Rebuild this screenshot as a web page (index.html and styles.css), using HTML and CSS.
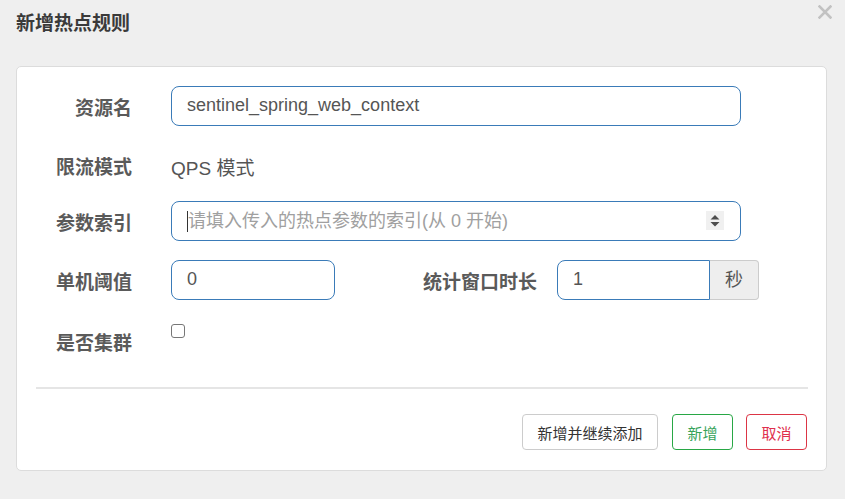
FILE: index.html
```html
<!DOCTYPE html>
<html lang="zh">
<head>
<meta charset="utf-8">
<title>新增热点规则</title>
<link rel="stylesheet" href="styles.css">
</head>
<body>
<div class="dialog">
  <div class="dialog-head">
    <h3 class="dialog-title">新增热点规则</h3>
    <svg class="close" width="14" height="14" viewBox="0 0 14 14"><path d="M1.5 1.5 L12.5 12.5 M12.5 1.5 L1.5 12.5" stroke="#c2c2c2" stroke-width="2.6" stroke-linecap="square"/></svg>
  </div>
  <div class="card">
    <div class="row row-1">
      <label class="label">资源名</label>
      <div class="control wide">sentinel_spring_web_context</div>
    </div>
    <div class="row row-2">
      <label class="label">限流模式</label>
      <div class="static">QPS 模式</div>
    </div>
    <div class="row row-3">
      <label class="label">参数索引</label>
      <div class="control wide number">
        <span class="caret"></span><span class="placeholder">请填入传入的热点参数的索引(从 0 开始)</span>
        <span class="spinner">
          <svg width="18" height="19" viewBox="0 0 18 19"><path d="M9 4 L13.5 8.5 L4.5 8.5 Z M4.5 11 L13.5 11 L9 15.5 Z" fill="#4d4d4d"/></svg>
        </span>
      </div>
    </div>
    <div class="row row-4">
      <label class="label">单机阈值</label>
      <div class="control small">0</div>
      <label class="label label-2">统计窗口时长</label>
      <div class="group">
        <div class="control group-input">1</div>
        <div class="addon">秒</div>
      </div>
    </div>
    <div class="row row-5">
      <label class="label">是否集群</label>
      <span class="checkbox"></span>
    </div>
    <div class="divider"></div>
    <div class="actions">
      <button class="btn btn-default">新增并继续添加</button>
      <button class="btn btn-success">新增</button>
      <button class="btn btn-danger">取消</button>
    </div>
  </div>
</div>
</body>
</html>
```

FILE: styles.css
```css
* { box-sizing: border-box; }
html, body { margin: 0; padding: 0; }
body {
  background: #efefef;
  font-family: "Liberation Sans", "Noto Sans CJK SC", sans-serif;
  color: #555;
  width: 845px;
  height: 499px;
  overflow: hidden;
}
.dialog { padding: 0 0 0 16px; }
.dialog-head {
  position: relative;
  height: 66px;
  padding-top: 14px;
}
.dialog-title {
  margin: 0;
  font-size: 19px;
  line-height: 20px;
  font-weight: bold;
  color: #3a3a3a;
}
.close {
  position: absolute;
  left: 802px;
  top: 5px;
}
.card {
  width: 811px;
  height: 405px;
  background: #fff;
  border: 1px solid #dcdcdc;
  border-radius: 5px;
  padding: 19px 0 0 0;
}
.row {
  display: flex;
  align-items: center;
  height: 40px;
}
.row-1 { margin-bottom: 19px; }
.row-2 { margin-bottom: 16px; }
.row-3 { margin-bottom: 19px; }
.row-4 { margin-bottom: 21px; }
.label {
  width: 115px;
  height: 40px;
  margin-right: 39px;
  padding-top: 6px;
  text-align: right;
  font-size: 19px;
  font-weight: bold;
  color: #5a5a5a;
  line-height: 34px;
  flex: none;
}
.static {
  font-size: 19px;
  color: #555;
  padding-top: 2px;
}
.control {
  height: 40px;
  border: 1px solid #3a7bb8;
  border-radius: 8px;
  padding: 0 15px;
  font-size: 18px;
  line-height: 36px;
  color: #555;
  position: relative;
  flex: none;
}
.wide { width: 570px; }
.small { width: 164px; }
.number { display: flex; align-items: center; }
.caret {
  display: inline-block;
  width: 1px;
  height: 21px;
  background: #333;
}
.placeholder { color: #a0a0a0; }
.spinner {
  position: absolute;
  left: 534px;
  top: 9px;
  width: 18px;
  height: 19px;
  background: #f0f0f0;
  display: flex;
}
.label-2 {
  width: 202px;
  margin-right: 20px;
}
.group { display: flex; }
.group-input {
  width: 153px;
  border-radius: 8px 0 0 8px;
}
.addon {
  width: 49px;
  height: 40px;
  background: #eee;
  border: 1px solid #ccc;
  border-left: none;
  border-radius: 0 4px 4px 0;
  font-size: 18px;
  line-height: 38px;
  text-align: center;
  color: #555;
}
.row-5 { align-items: flex-start; }
.checkbox {
  display: block;
  width: 14px;
  height: 14px;
  margin-top: 3px;
  border: 1px solid #777;
  border-radius: 3px;
  background: #fff;
}
.divider {
  height: 2px;
  background: #e5e5e5;
  margin: 26px 18px 0 19px;
}
.actions {
  display: flex;
  justify-content: flex-end;
  gap: 13px;
  padding: 25px 19px 0 0;
}
.btn {
  height: 36px;
  padding: 0 14.5px;
  white-space: nowrap;
  font-family: "Liberation Sans", "Noto Sans CJK SC", sans-serif;
  font-size: 15px;
  background: #fff;
  border-radius: 4px;
  border: 1px solid #ccc;
  color: #333;
}
.btn-default { margin-right: 1px; }
.btn-success { border-color: #28a745; color: #36a35a; }
.btn-danger { border-color: #dc3545; color: #e0304e; }
```
